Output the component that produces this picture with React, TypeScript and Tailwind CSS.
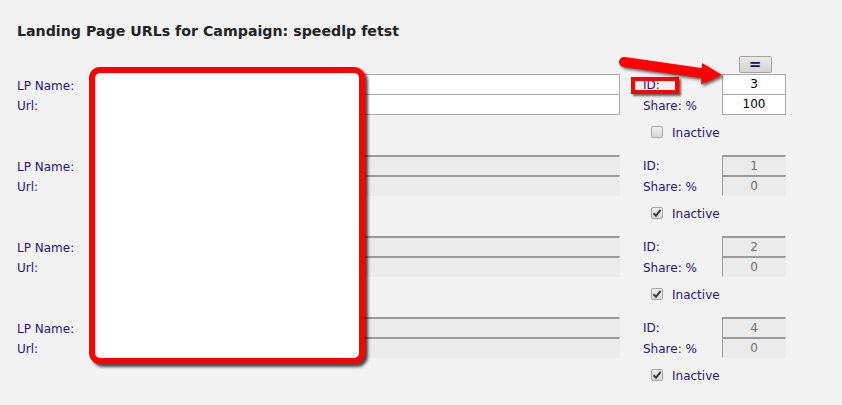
import React from "react";

type RowProps = {
  id: string;
  share: string;
  disabled: boolean;
  checked: boolean;
};

function Box({ value, disabled }: { value: string; disabled: boolean }) {
  return disabled ? (
    <div className="h-[21px] w-[64px] border-t-2 border-l border-r border-b border-t-[#9a9a9a] border-l-[#9a9a9a] border-r-[#ebebeb] border-b-[#ebebeb] bg-[#ebebeb] text-center leading-[18px] text-[#707070]">
      {value}
    </div>
  ) : (
    <div className="h-[21px] w-[64px] border border-[#a9a9a9] bg-white text-center leading-[19px] text-black">
      {value}
    </div>
  );
}

function Field({ disabled }: { disabled: boolean }) {
  return disabled ? (
    <div className="h-[21px] w-[525px] border-t-2 border-l border-r border-b border-t-[#9a9a9a] border-l-[#9a9a9a] border-r-[#ebebeb] border-b-[#ebebeb] bg-[#ebebeb]" />
  ) : (
    <div className="h-[21px] w-[525px] border border-[#a9a9a9] bg-white" />
  );
}

function Check({ checked }: { checked: boolean }) {
  return (
    <div className="flex h-[12px] w-[12px] items-center justify-center rounded-[2px] border border-[#a6a6a6] bg-gradient-to-b from-[#eeeeee] to-[#d9d9d9]">
      {checked && (
        <svg width="10" height="10" viewBox="0 0 10 10">
          <path d="M1.5 5.2 L4 7.8 L8.6 1.8" fill="none" stroke="#3a3a3a" strokeWidth="2" />
        </svg>
      )}
    </div>
  );
}

function Row({ id, share, disabled, checked }: RowProps) {
  return (
    <div className="flex h-[81px]">
      <div className="flex flex-col">
        <div className="flex h-[21px]">
          <span className="w-[78px] pt-[2px] leading-[21px]">LP Name:</span>
          <Field disabled={disabled} />
        </div>
        <div className="-mt-px flex h-[21px]">
          <span className="w-[78px] pt-[2px] leading-[21px]">Url:</span>
          <Field disabled={disabled} />
        </div>
      </div>
      <div className="ml-[22px] flex flex-col">
        <div className="flex h-[21px]">
          <span className="w-[80px] pl-[1px] pt-[1px] leading-[21px]">ID:</span>
          <Box value={id} disabled={disabled} />
        </div>
        <div className="-mt-px flex h-[21px]">
          <span className="w-[80px] pl-[1px] pt-[2px] leading-[21px]">Share: %</span>
          <Box value={share} disabled={disabled} />
        </div>
        <div className="ml-[9px] mt-[9px] flex items-center gap-[9px]">
          <Check checked={checked} />
          <span className="pt-[2px] leading-[14px]">Inactive</span>
        </div>
      </div>
    </div>
  );
}

export default function App() {
  const rows: RowProps[] = [
    { id: "3", share: "100", disabled: false, checked: false },
    { id: "1", share: "0", disabled: true, checked: true },
    { id: "2", share: "0", disabled: true, checked: true },
    { id: "4", share: "0", disabled: true, checked: true },
  ];
  return (
    <div className="relative h-[405px] w-[842px] overflow-hidden bg-[#f2f2f2] font-['DejaVu_Sans',sans-serif] text-[12px] text-[#28137f]">
      <h1 className="pl-[17px] pt-[22px] text-[14.2px] font-bold leading-[18px] text-[#222222]">
        Landing Page URLs for Campaign: speedlp fetst
      </h1>
      <div className="pl-[17px]">
        <div className="mb-[1px] mt-[16px] flex h-[17px]">
          <div className="w-[705px]" />
          <div className="flex w-[64px] justify-center pl-[2px]">
            <button className="flex h-[17px] w-[33px] items-center justify-center rounded-[2px] border border-[#a3a3a3] bg-gradient-to-b from-[#eaeaea] to-[#d4d4d4] text-[15px] font-bold leading-none text-[#0d0d5c]">
              =
            </button>
          </div>
        </div>
        {rows.map((r) => (
          <Row key={r.id} {...r} />
        ))}
      </div>

      {/* annotation overlays */}
      <div className="absolute left-[89px] top-[67px] h-[297px] w-[276px] rounded-[11px] border-[6px] border-[#ff0000] bg-white shadow-[3px_3px_3px_rgba(0,0,0,0.7)]" />
      <div className="absolute left-[631px] top-[77px] h-[17px] w-[48px] border-[4px] border-[#ff0000] shadow-[2px_2px_2px_rgba(0,0,0,0.6)]" />
      <svg
        className="pointer-events-none absolute left-0 top-0 drop-shadow-[2px_2px_1.5px_rgba(0,0,0,0.6)]"
        width="842"
        height="405"
      >
        <line x1="624" y1="62" x2="704" y2="73.5" stroke="#ff0000" strokeWidth="10" strokeLinecap="round" />
        <polygon points="702,63 722,75 701,84.5" fill="#ff0000" />
      </svg>
    </div>
  );
}
